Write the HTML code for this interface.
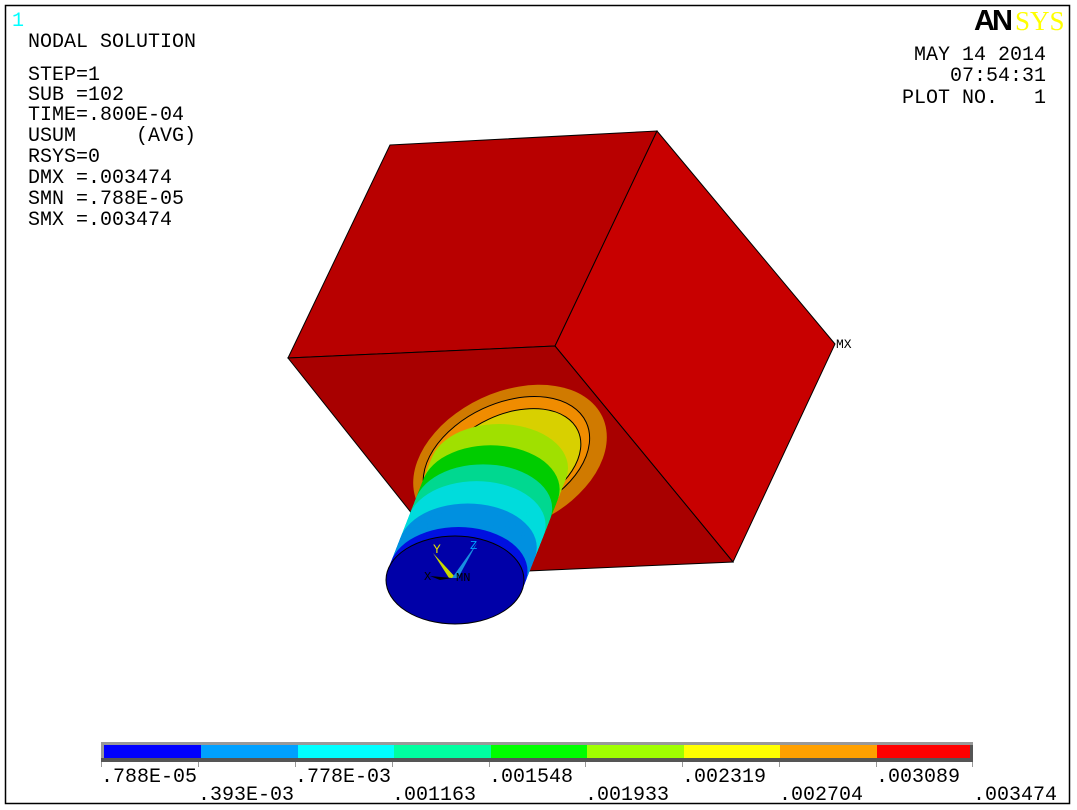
<!DOCTYPE html>
<html><head><meta charset="utf-8"><style>
html,body{margin:0;padding:0;background:#fff;}
svg{display:block;}
text{font-family:"Liberation Mono",monospace;font-size:20px;fill:#000;}
</style></head><body>
<svg id="s" width="1077" height="810" viewBox="0 0 1077 810" xmlns="http://www.w3.org/2000/svg">
<rect x="0" y="0" width="1077" height="810" fill="#fff"/>
<rect x="5.5" y="5.5" width="1064" height="798" fill="none" stroke="#000" stroke-width="1.5"/>
<text x="12" y="26" style="fill:#00ffff">1</text>
<text x="28" y="47">NODAL SOLUTION</text>
<text x="28" y="80">STEP=1</text>
<text x="28" y="100">SUB =102</text>
<text x="28" y="120">TIME=.800E-04</text>
<text x="28" y="141" xml:space="preserve">USUM     (AVG)</text>
<text x="28" y="162">RSYS=0</text>
<text x="28" y="183">DMX =.003474</text>
<text x="28" y="204">SMN =.788E-05</text>
<text x="28" y="225">SMX =.003474</text>
<text x="1046" y="60" text-anchor="end">MAY 14 2014</text>
<text x="1046" y="81" text-anchor="end">07:54:31</text>
<text x="1046" y="103" text-anchor="end" xml:space="preserve">PLOT NO.   1</text>
<text x="974" y="30" style="font-family:'Liberation Sans',sans-serif;font-weight:bold;font-size:29px;fill:#000;letter-spacing:-3px">AN</text>
<text x="1015" y="30" style="font-family:'Liberation Serif',serif;font-size:27px;fill:#ffff00">SYS</text>
<polygon points="390,145 657,131 555,346 288,358" fill="#b80000" stroke="#000" stroke-width="1"/>
<polygon points="657,131 835,344 733,562 555,346" fill="#c80000" stroke="#000" stroke-width="1"/>
<polygon points="288,358 555,346 733,562 460,574" fill="#a80000" stroke="#000" stroke-width="1"/>
<text x="836" y="348" style="font-size:13px">MX</text>
<g transform="translate(510,460) rotate(-25)">
<ellipse rx="102" ry="68" fill="#d07a00"/>
<ellipse rx="88" ry="56" fill="#f08c00" stroke="#000" stroke-width="1" transform="translate(-3,-2)"/>
<ellipse rx="76" ry="48" fill="#d8d000" stroke="#000" stroke-width="1" transform="translate(-2,2)"/>
</g>
<g id="cyl"></g>
<ellipse cx="455" cy="580" rx="69" ry="44" fill="#0000a8" stroke="#000" stroke-width="1"/>
<polygon points="433,553 449,578 456,578" fill="#c8d800"/>
<polygon points="477,543 452,578 458,578" fill="#1890e0"/>
<polygon points="430,576 452,578 440,580" fill="#000"/>
<text x="433" y="553" style="font-size:13px;fill:#e0e000">Y</text>
<text x="470" y="549" style="font-size:12px;fill:#00a0ff">Z</text>
<text x="424" y="580" style="font-size:12px">X</text>
<text x="456" y="581" style="font-size:12px">MN</text>
<rect x="101" y="742" width="872" height="20" fill="#555"/>
<rect x="101" y="742" width="872" height="3" fill="#999"/>
<rect x="101" y="742" width="3" height="16" fill="#999"/>
<rect x="104" y="745" width="97" height="13" fill="#0000ff"/>
<rect x="201" y="745" width="97" height="13" fill="#00a0ff"/>
<rect x="298" y="745" width="96" height="13" fill="#00ffff"/>
<rect x="394" y="745" width="97" height="13" fill="#00ffa0"/>
<rect x="491" y="745" width="96" height="13" fill="#00ff00"/>
<rect x="587" y="745" width="97" height="13" fill="#a0ff00"/>
<rect x="684" y="745" width="96" height="13" fill="#ffff00"/>
<rect x="780" y="745" width="97" height="13" fill="#ffa000"/>
<rect x="877" y="745" width="93" height="13" fill="#ff0000"/>
<g fill="#999">
<rect x="101" y="762" width="1" height="5"/><rect x="198" y="762" width="1" height="5"/><rect x="295" y="762" width="1" height="5"/><rect x="392" y="762" width="1" height="5"/><rect x="489" y="762" width="1" height="5"/><rect x="585" y="762" width="1" height="5"/><rect x="682" y="762" width="1" height="5"/><rect x="779" y="762" width="1" height="5"/><rect x="876" y="762" width="1" height="5"/><rect x="972" y="762" width="1" height="5"/>
</g>
<text x="101" y="782">.788E-05</text>
<text x="198" y="800">.393E-03</text>
<text x="295" y="782">.778E-03</text>
<text x="392" y="800">.001163</text>
<text x="489" y="782">.001548</text>
<text x="585" y="800">.001933</text>
<text x="682" y="782">.002319</text>
<text x="779" y="800">.002704</text>
<text x="876" y="782">.003089</text>
<text x="973" y="800">.003474</text>
</svg>
<script>
(function(){
var g=document.getElementById('cyl');var ns='http://www.w3.org/2000/svg';
var bands=[[0,0.09,'#0010e0'],[0.09,0.3,'#0090e0'],[0.3,0.5,'#00dcdc'],[0.5,0.65,'#00d890'],[0.65,0.82,'#00cc00'],[0.82,1.01,'#a0e000']];
var x0=455,y0=580,dx=44,dy=-112;
for(var i=100;i>=0;i--){var t=i/100;var c='#a0e000';
for(var b=0;b<bands.length;b++){if(t>=bands[b][0]&&t<bands[b][1]){c=bands[b][2];}}
var e=document.createElementNS(ns,'ellipse');
e.setAttribute('cx',x0+dx*t);e.setAttribute('cy',y0+dy*t);e.setAttribute('rx',69);e.setAttribute('ry',44);e.setAttribute('fill',c);g.appendChild(e);}
})();
</script>
</body></html>
